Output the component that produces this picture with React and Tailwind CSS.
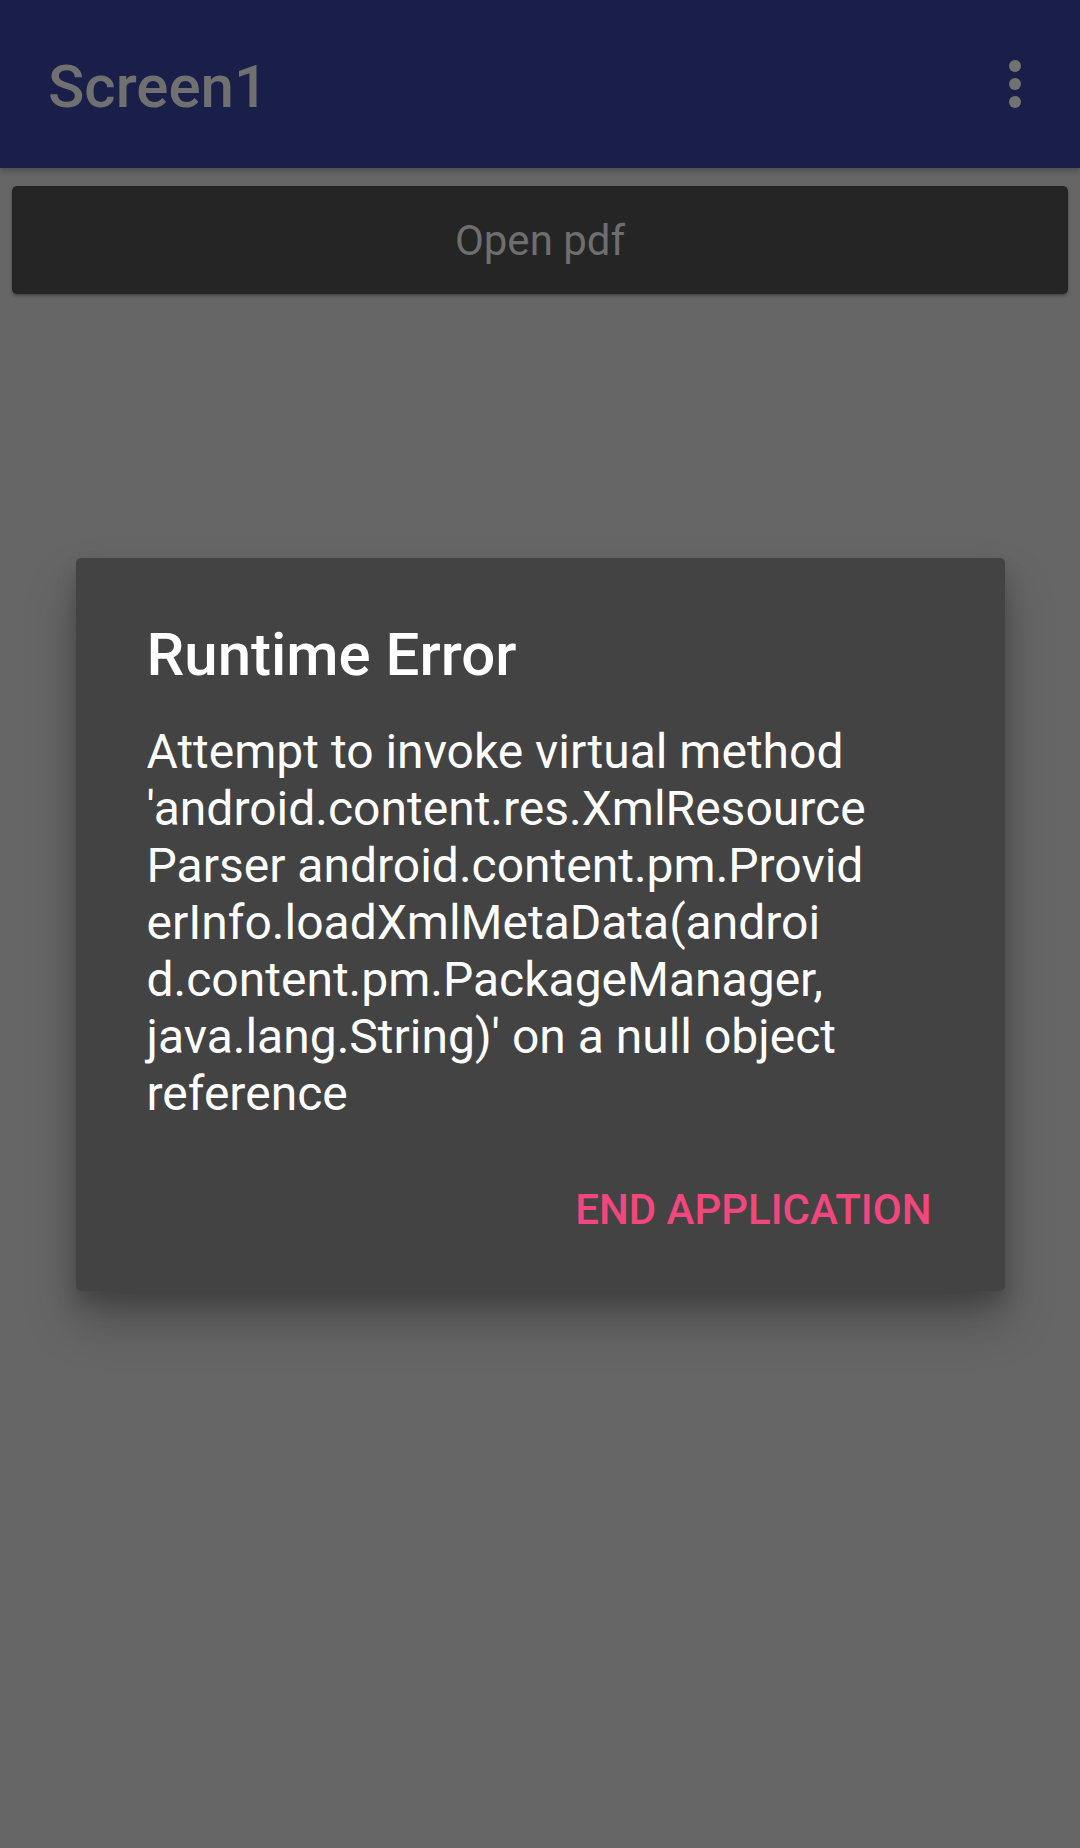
import React from 'react'

const lines = [
  'Attempt to invoke virtual method',
  "'android.content.res.XmlResource",
  'Parser android.content.pm.Provid',
  'erInfo.loadXmlMetaData(androi',
  'd.content.pm.PackageManager,',
  "java.lang.String)' on a null object",
  'reference',
]

function ErrorDialog() {
  return (
    <div className="absolute inset-0 flex items-center justify-center">
      <div className="w-[929px] bg-[#434343] rounded-[5px] shadow-[0_30px_50px_rgba(0,0,0,0.25),0_12px_20px_rgba(0,0,0,0.18)] pl-[71px] pr-[73px] pt-[62px] pb-[57px]">
        <h2 className="text-[60px] leading-[70px] font-medium text-white">Runtime Error</h2>
        <div className="mt-[33px] text-[48px] leading-[57px] text-white whitespace-nowrap">
          {lines.map((l, i) => (
            <div key={i}>{l}</div>
          ))}
        </div>
        <div className="mt-[63px] flex justify-end">
          <button className="text-[42px] leading-[49px] font-medium text-[#f2467e]">
            END APPLICATION
          </button>
        </div>
      </div>
    </div>
  )
}

const App = () => {
  return (
    <div className="relative w-[1080px] h-[1848px] bg-[#666666] overflow-hidden font-['Roboto',sans-serif]">
      <div className="h-[168px] bg-[#1a1f4a] flex items-center justify-between pl-[48px] pr-[59px] pt-[6px] shadow-[0_3px_6px_rgba(0,0,0,0.25)]">
        <span className="text-[60px] leading-[70px] font-medium text-[#707070]">Screen1</span>
        <div className="flex flex-col gap-[6px] -mt-[6px]">
          <span className="w-[12px] h-[12px] rounded-full bg-[#727272]" />
          <span className="w-[12px] h-[12px] rounded-full bg-[#727272]" />
          <span className="w-[12px] h-[12px] rounded-full bg-[#727272]" />
        </div>
      </div>
      <div className="px-[12px] pt-[18px]">
        <button className="w-full h-[108px] bg-[#252525] rounded-[5px] shadow-[0_2px_3px_rgba(0,0,0,0.3)] text-[42px] leading-[49px] text-[#6e6e6e]">
          Open pdf
        </button>
      </div>
      <ErrorDialog />
    </div>
  )
}

export default App
